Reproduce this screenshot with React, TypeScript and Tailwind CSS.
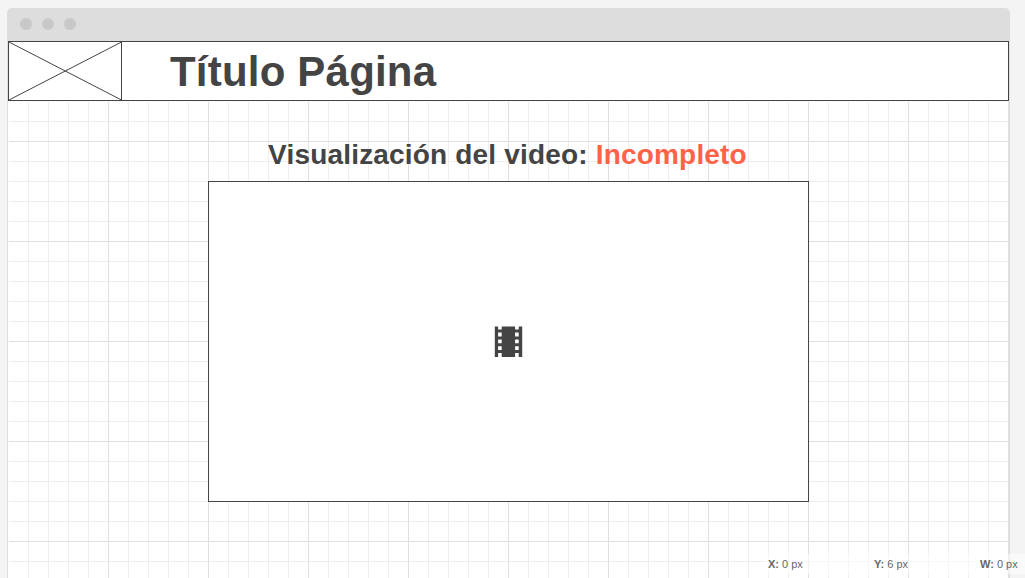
import React from "react";

const readouts = [
  { label: "X:", value: "0 px" },
  { label: "Y:", value: "6 px" },
  { label: "W:", value: "0 px" },
];

function TitleBar() {
  return (
    <div className="flex h-[33px] shrink-0 items-center gap-[10px] rounded-t-[5px] bg-[#dddddd] pl-[13px] pb-px">
      <span className="size-3 rounded-full bg-[#c8c8c8]" />
      <span className="size-3 rounded-full bg-[#c8c8c8]" />
      <span className="size-3 rounded-full bg-[#c8c8c8]" />
    </div>
  );
}

function Header() {
  return (
    <header className="flex h-[60px] w-[1001px] shrink-0 border border-[#444444] bg-white shadow-[0_1px_0_#fcfcfc]">
      <svg width="113" height="58" viewBox="0 0 112 58" className="block shrink-0 border-r border-[#444444]">
        <path d="M0 0L112.5 58M0 58L112.5 0" stroke="#444444" strokeWidth="1" />
      </svg>
      <h1 className="ml-[48px] whitespace-nowrap text-[42px] leading-[60px] font-bold tracking-[0.2px]">
        Título Página
      </h1>
    </header>
  );
}

function FilmIcon() {
  return (
    <svg width="29" height="31" viewBox="0 0 29 31" fill="#444444">
      <path
        fillRule="evenodd"
        d="M.8 .4H4.1V3.4H7.7V.4H21.1V3.4H24.7V.4H28.2V31H24.7V27.1H21.1V31H7.7V27.1H4.1V31H.8ZM4.1 6.6V10.4H7.7V6.6ZM4.1 13.5V17.2H7.7V13.5ZM4.1 20.3V24H7.7V20.3ZM21.1 6.6V10.4H24.7V6.6ZM21.1 13.5V17.2H24.7V13.5ZM21.1 20.3V24H24.7V20.3Z"
      />
    </svg>
  );
}

function StatusBar() {
  return (
    <footer className="absolute right-0 bottom-1 flex h-5 w-[262px] overflow-hidden text-[11px] leading-[21px] text-[#666666]">
      {readouts.map((r) => (
        <div key={r.label} className="w-[106px] shrink-0 bg-white/50 pl-[5px] whitespace-nowrap">
          <b>{r.label}</b> {r.value}
        </div>
      ))}
    </footer>
  );
}

export default function App() {
  return (
    <div className="relative h-[578px] w-[1025px] overflow-hidden bg-[#f4f4f4] pt-2 pl-[7px] font-['Liberation_Sans',Arial,sans-serif] text-[#444444]">
      <div className="flex h-[570px] w-[1003px] flex-col">
        <TitleBar />
        <div className="flex flex-1 flex-col border-x border-[#dddddd] bg-white bg-[linear-gradient(to_right,#ffffff_1px,transparent_1px),linear-gradient(to_right,#e0e0e0_1px,transparent_1px),linear-gradient(to_bottom,#e0e0e0_1px,transparent_1px),linear-gradient(to_right,#eeeeee_1px,transparent_1px),linear-gradient(to_bottom,#eeeeee_1px,transparent_1px)] bg-size-[2000px_100%,100px_100px,100px_100px,20px_20px,20px_20px]">
          <Header />
          <main className="flex flex-col items-center">
            <h2 className="mt-[38px] mr-[2px] h-[42px] whitespace-nowrap text-[28px] leading-[32px] font-bold tracking-[0.18px]">
              Visualización del video: <span className="text-[#ff6347]">Incompleto</span>
            </h2>
            <section className="flex h-[321px] w-[601px] items-center justify-center border border-[#444444] bg-white">
              <FilmIcon />
            </section>
          </main>
        </div>
      </div>
      <StatusBar />
    </div>
  );
}
